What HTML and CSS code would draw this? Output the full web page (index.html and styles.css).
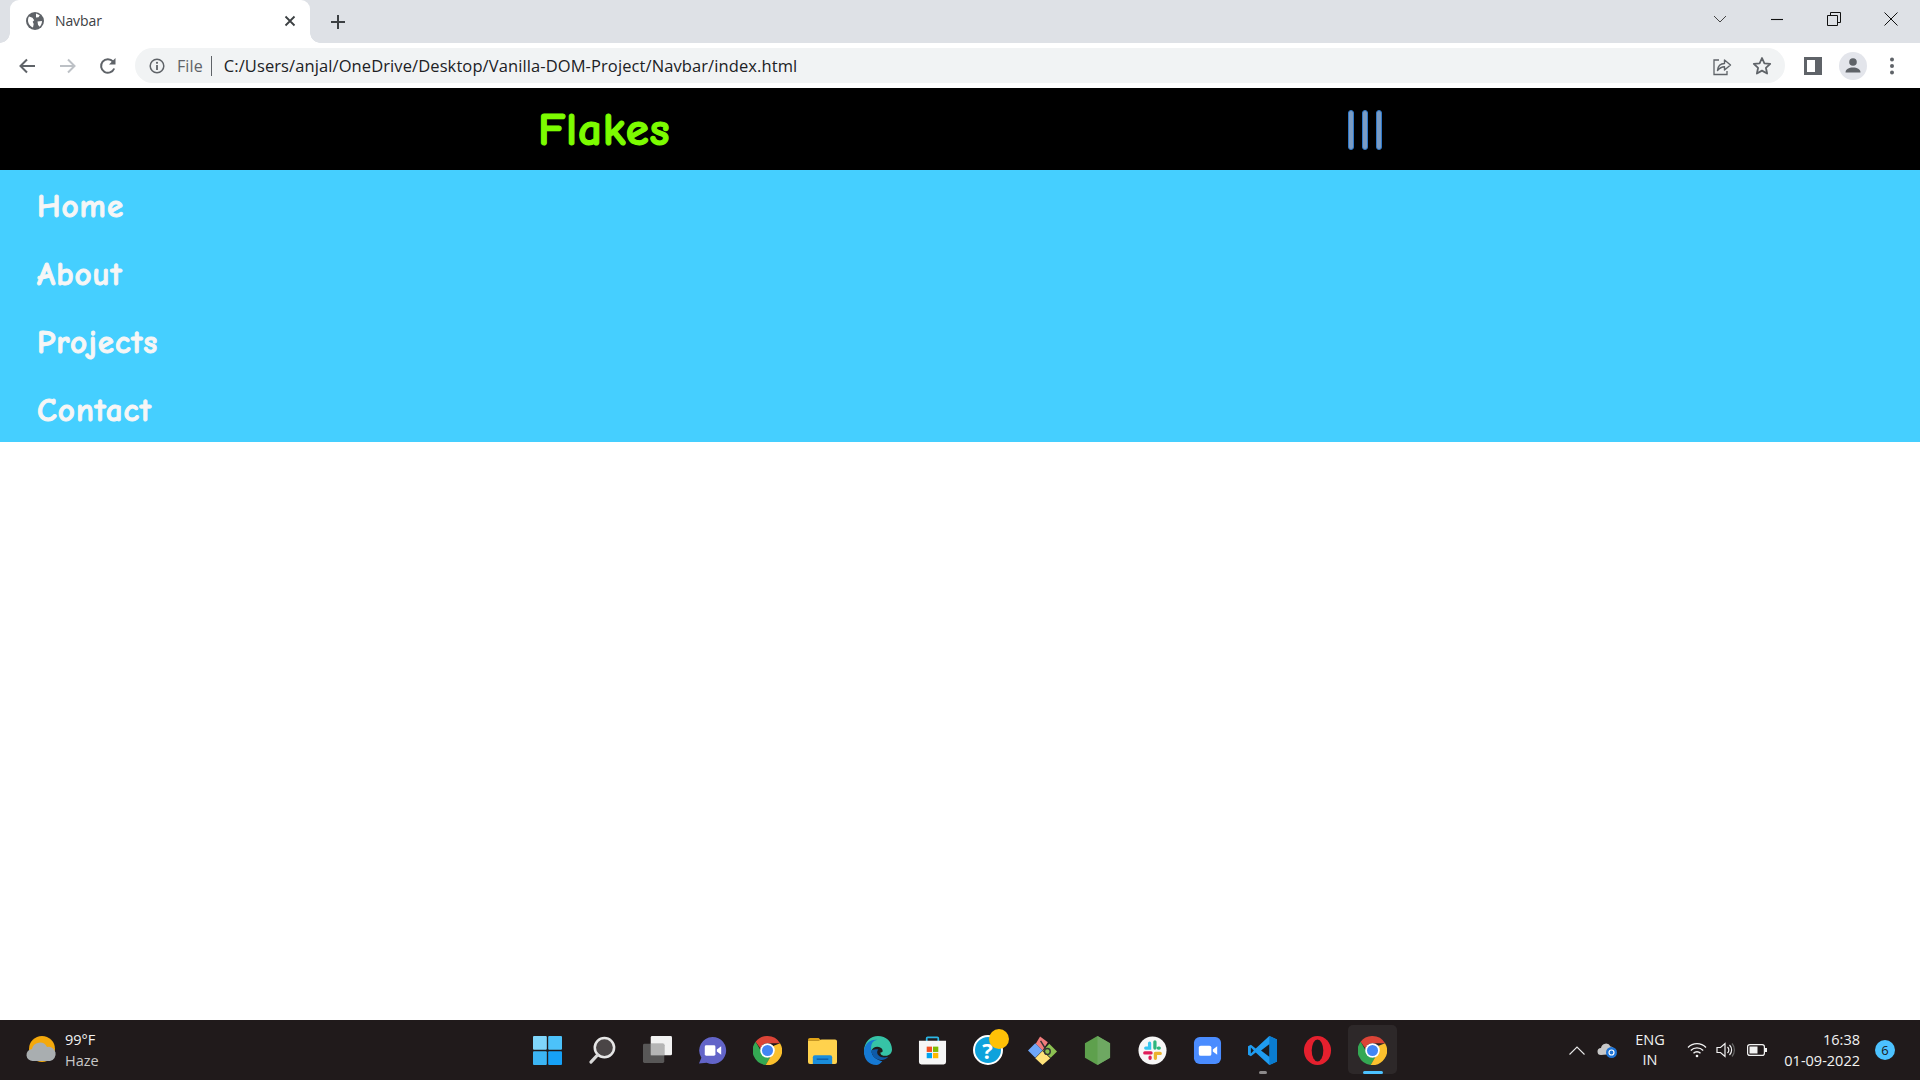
FILE: index.html
```html
<!DOCTYPE html>
<html lang="en">
<head>
<meta charset="utf-8">
<title>Navbar</title>
<link rel="stylesheet" href="styles.css">
</head>
<body>
<svg class="defs" width="0" height="0" aria-hidden="true">
  <symbol id="chrome" viewBox="0 0 48 48">
    <path fill="#db4437" d="M24 4a20 20 0 0 1 17.3 10H24a10 10 0 0 0-9.600 7.200L7.600 12A20 20 0 0 1 24 4z"/>
    <path fill="#34a853" d="M7.600 12l9.300 16a9.900 9.900 0 0 0 11.200 5.100L21.500 44A20 20 0 0 1 7.600 12z"/>
    <path fill="#fbc02d" d="M41.300 14A20 20 0 0 1 21.500 44l8.600-14.900A10 10 0 0 0 31 18z"/>
    <circle cx="24" cy="24" r="10" fill="#fff"/>
    <circle cx="24" cy="24" r="7.600" fill="#4285f4"/>
  </symbol>
</svg>

<div class="tabstrip">
  <div class="tab">
    <svg class="favicon" viewBox="0 0 18 18"><circle cx="9" cy="9" r="9" fill="#5f6368"/><path fill="#fff" d="M3 4.500l3.500 1.300 1.700 2.500-1.500 1.500 1 2.300-.7 3.500C4 14.500 1.800 11 2 8c.1-1.300.4-2.600 1-3.500zM10 1.500l3.800 1.700-1.300 2-2.500.3zM11.500 9.500l4.500-.5c0 2.500-1 4.500-2.500 5.700l-1.500-2z"/></svg>
    <span class="tab-title">Navbar</span>
    <svg class="tab-close" viewBox="0 0 12 12"><path d="M1.500 1.500l9 9M10.500 1.500l-9 9" stroke="#3c4043" stroke-width="1.800" fill="none"/></svg>
  </div>
  <svg class="new-tab" viewBox="0 0 14 14"><path d="M7 0v14M0 7h14" stroke="#3c4043" stroke-width="2" fill="none"/></svg>
  <div class="window-controls">
    <svg class="wc wc-chevron" viewBox="0 0 14 8"><path d="M1 1l6 6 6-6" stroke="#444" fill="none"/></svg>
    <svg class="wc" viewBox="0 0 14 14"><path d="M1 7.500h12" stroke="#111" stroke-width="1.100" fill="none"/></svg>
    <svg class="wc" viewBox="0 0 14 14"><path d="M.5 3.500h10v10H.5zM3.500 3.500V.5h10v10h-3" stroke="#111" fill="none"/></svg>
    <svg class="wc" viewBox="0 0 14 14"><path d="M.5.5l13 13M13.500.5l-13 13" stroke="#111" fill="none"/></svg>
  </div>
</div>

<div class="toolbar">
  <svg class="tool" viewBox="0 0 18 18"><path d="M17 9H3M9 2.500L2.500 9 9 15.500" stroke="#5f6368" stroke-width="2" fill="none"/></svg>
  <svg class="tool" viewBox="0 0 18 18"><path d="M1 9h14M9 2.500L15.500 9 9 15.500" stroke="#bdc1c6" stroke-width="2" fill="none"/></svg>
  <svg class="tool" viewBox="0 0 18 18"><path d="M15.200 11.500A6.800 6.800 0 1 1 14 4.500" stroke="#5f6368" stroke-width="2" fill="none"/><path d="M16.500 1v6.500H10z" fill="#5f6368"/></svg>
  <div class="omnibox">
    <svg class="info" viewBox="0 0 16 16"><circle cx="8" cy="8" r="6.800" stroke="#5f6368" stroke-width="1.500" fill="none"/><path d="M8 7v5" stroke="#5f6368" stroke-width="1.800"/><circle cx="8" cy="4.800" r="1.100" fill="#5f6368"/></svg>
    <span class="scheme">File</span>
    <span class="sep"></span>
    <span class="url">C:/Users/anjal/OneDrive/Desktop/Vanilla-DOM-Project/Navbar/index.html</span>
    <svg class="omni-icon share" viewBox="0 0 20 20"><path d="M7 4H2v14.500h13V15" stroke="#5f6368" stroke-width="1.300" fill="none"/><path d="M5.500 14.500C6 9.500 9 7.500 12.500 7.500V4l6 5-6 5v-3.300C9.500 10.700 7.500 12 5.500 14.500z" stroke="#5f6368" stroke-width="1.400" fill="none" stroke-linejoin="round"/></svg>
    <svg class="omni-icon star" viewBox="0 0 20 20"><path d="M10 2l2.400 5.300 5.800.6-4.300 3.900 1.200 5.700L10 14.600l-5.100 2.900 1.200-5.700L1.800 7.900l5.800-.6z" stroke="#5f6368" stroke-width="1.800" fill="none" stroke-linejoin="round"/></svg>
  </div>
  <svg class="side-panel" viewBox="0 0 18 18"><rect width="18" height="18" fill="#5f6368"/><rect x="3" y="3" width="8" height="12" fill="#fff"/></svg>
  <div class="avatar"><svg viewBox="0 0 20 20"><circle cx="10" cy="6" r="3.800" fill="#5f6368"/><path d="M2.500 16.500c0-3.500 3.500-5 7.500-5s7.500 1.500 7.500 5z" fill="#5f6368"/></svg></div>
  <svg class="dots" viewBox="0 0 4 18"><circle cx="2" cy="2.500" r="2" fill="#5f6368"/><circle cx="2" cy="9" r="2" fill="#5f6368"/><circle cx="2" cy="15.500" r="2" fill="#5f6368"/></svg>
</div>

<header class="nav">
  <div class="logo">Flakes</div>
  <div class="burger"><span></span><span></span><span></span></div>
</header>
<ul class="menu">
  <li>Home</li>
  <li>About</li>
  <li>Projects</li>
  <li>Contact</li>
</ul>
<main class="page"></main>

<footer class="taskbar">
  <div class="weather">
    <svg class="weather-icon" viewBox="0 0 32 28"><circle cx="17" cy="13" r="13" fill="#f4a90c"/><path d="M8 25a6 6 0 0 1-1-12 8 8 0 0 1 15-2 7 7 0 0 1 3 14z" fill="#a9aeb0"/></svg>
    <div class="weather-text"><span>99°F</span><span class="muted">Haze</span></div>
  </div>

  <div class="apps">
    <div class="app"><svg class="i" viewBox="0 0 30 30"><rect width="14.300" height="14.300" rx="1" fill="#7fd6fb"/><rect x="15.700" width="14.300" height="14.300" rx="1" fill="#4cc2fa"/><rect y="15.700" width="14.300" height="14.300" rx="1" fill="#3cb5f4"/><rect x="15.700" y="15.700" width="14.300" height="14.300" rx="1" fill="#16a1f7"/></svg></div>
    <div class="app"><svg class="i" viewBox="0 0 30 30"><circle cx="17" cy="12" r="10" fill="#4a4546" stroke="#e6e6e6" stroke-width="2.600"/><path d="M10 19.500L3 27" stroke="#d8d8d8" stroke-width="3.200" stroke-linecap="round"/></svg></div>
    <div class="app"><svg class="i" viewBox="0 0 30 30"><rect x="8" width="22" height="20" rx="1.500" fill="#f2f2f2"/><rect y="8" width="22" height="20" rx="1.500" fill="#5e5e5e" fill-opacity=".9"/><rect x="8" y="8" width="14" height="12" fill="#b5b5b5"/></svg></div>
    <div class="app"><svg class="i" viewBox="0 0 30 30"><path d="M15 1a14 14 0 1 1-6 26.600L1 28.500l2.500-6A14 14 0 0 1 15 1z" fill="#6264c8"/><rect x="7" y="9.500" width="11" height="11" rx="1.500" fill="#fff"/><path d="M19.500 14l4.500-3.500v9L19.500 16z" fill="#fff"/></svg></div>
    <div class="app"><svg class="i" viewBox="4 4 40 40"><use href="#chrome" width="48" height="48"/></svg></div>
    <div class="app"><svg class="i i-files" viewBox="0 0 30 28"><path d="M0 3a2 2 0 0 1 2-2h9l3 3h-14z" fill="#e0a317"/><path d="M0 4h11l3-1.500H28a2 2 0 0 1 2 2V26a2 2 0 0 1-2 2H2a2 2 0 0 1-2-2z" fill="#ffd24d"/><path d="M5 28v-7a2 2 0 0 1 2-2h16a2 2 0 0 1 2 2v7z" fill="#1a8ddb"/><path d="M9 23h12" stroke="#0a5da8" stroke-width="1.500"/></svg></div>
    <div class="app"><svg class="i" viewBox="0 0 30 30"><path d="M1 16C1 6 8 0 15.500 0 24 0 30 6 30 14c0 4-3 6.500-6.500 6.500-4 0-5.500-1.500-5.500-3.500 4 .5 3-6-3.500-6C10 11 8 15 8.500 19 3 23 1 20 1 16z" fill="#36c3a6"/><path d="M1 16c0-8 7-13 14-12-5 1-7 4-6.500 10.500C9 22 15 25 20 26c-2 2-4 4-6 4C6 30 1 24 1 16z" fill="#1679d3"/><path d="M8.500 15c.5 6 6 11 12.500 9.500 2.500-.5 4-1.500 5-3-3 1.500-8 1-10-1.500-2-2-1.500-5 0-6-4-1-7 .5-7.500 1z" fill="#0e5aa8"/></svg></div>
    <div class="app"><svg class="i" viewBox="0 0 30 30"><path d="M9 6V2.500a1 1 0 0 1 1-1h10a1 1 0 0 1 1 1V6" stroke="#2bb7e6" stroke-width="1.800" fill="none"/><path d="M1 5h28v22a2.500 2.500 0 0 1-2.500 2.500h-23A2.500 2.500 0 0 1 1 27z" fill="#f6f6f6"/><rect x="9" y="11" width="5.500" height="5.500" fill="#f25022"/><rect x="15.500" y="11" width="5.500" height="5.500" fill="#7fba00"/><rect x="9" y="17.500" width="5.500" height="5.500" fill="#00a4ef"/><rect x="15.500" y="17.500" width="5.500" height="5.500" fill="#ffb900"/></svg></div>
    <div class="app"><div class="help-circle">?</div><span class="help-dot"></span></div>
    <div class="app"><svg class="i" viewBox="0 0 30 30"><path d="M15 15L8 8l4.500-7.500 8 6z" fill="#f07c7c"/><path d="M0 15l7.500-7.500L15 15l-7.500 7.500z" fill="#6ea6f8"/><path d="M15.500 15l6.500-7 8 8-6.500 6.500z" fill="#8cc152"/><path d="M7.500 23l7.500-7.500 8 7.500-8 7z" fill="#ffe27a"/><circle cx="20" cy="16" r="3" fill="none" stroke="#333" stroke-width="1.500"/><path d="M13 5l5 8" stroke="#333" stroke-width="1.500"/></svg></div>
    <div class="app"><svg class="i" viewBox="0 0 28 30"><path d="M14 0l13 7.500v15L14 30 1 22.500v-15z" fill="#5ea04d"/><path d="M14 0l13 7.500v15L14 30z" fill="#6ea862"/></svg></div>
    <div class="app"><svg class="i" viewBox="0 0 30 30"><circle cx="15" cy="15" r="14.500" fill="#f7f7f7"/><g stroke-width="3.400" stroke-linecap="round" fill="none"><path d="M12 7.500v5H8" stroke="#36c5f0"/><path d="M17.500 6v6.500M22 12.500h-1" stroke="#2eb67d"/><path d="M18 18h5M18 18v5" stroke="#ecb22e"/><path d="M7 17.500h6.500M12.500 22v1" stroke="#e01e5a"/></g></svg></div>
    <div class="app"><svg class="i" viewBox="0 0 30 30"><rect width="28" height="28" x="1" y="1" rx="6" fill="#4a8cff"/><rect x="6" y="10" width="13" height="10.500" rx="2" fill="#fff"/><path d="M20.500 14l4.500-3.500v9L20.500 16z" fill="#fff"/></svg></div>
    <div class="app"><svg class="i" viewBox="0 0 30 30"><path d="M22 0l8 3.500v23L22 30 8 17l-5 4-3-1.500v-9L3 9l5 4z" fill="#1f9cf0"/><path d="M22 0l8 3.500v23L22 30z" fill="#0a7cd0"/><path d="M22 8.500v13L13.500 15z" fill="#1c1a1b"/><path d="M3 12v6l3-3z" fill="#1c1a1b"/></svg><span class="mark"></span></div>
    <div class="app"><svg class="i" viewBox="0 0 30 30"><ellipse cx="15" cy="15" rx="14" ry="15" fill="#e5202e"/><ellipse cx="15" cy="15" rx="6" ry="11.500" fill="#1f1a1b"/></svg></div>
    <div class="app active"><svg class="i" viewBox="4 4 40 40"><use href="#chrome" width="48" height="48"/></svg><span class="mark mark-on"></span></div>
  </div>

  <div class="tray">
    <svg class="tray-chevron" viewBox="0 0 16 9"><path d="M.5 8.500L8 1l7.500 7.500" stroke="#e8e8e8" stroke-width="1.100" fill="none"/></svg>
    <svg class="tray-cloud" viewBox="0 0 20 16"><path d="M4 13a3.500 3.500 0 0 1 0-7 5 5 0 0 1 9.500-1.500A4 4 0 0 1 15 12z" fill="#c8c8c8"/><circle cx="14.500" cy="10.500" r="5.500" fill="#1e74d6"/><circle cx="14.500" cy="10.500" r="2.500" fill="none" stroke="#fff" stroke-width="1.200"/></svg>
    <div class="lang"><span>ENG</span><span>IN</span></div>
    <svg class="tray-wifi" viewBox="0 0 20 16"><path d="M1 5.500a12.500 12.500 0 0 1 18 0M3.800 8.500a8.500 8.500 0 0 1 12.400 0M6.500 11.300a4.700 4.700 0 0 1 7 0" stroke="#f2f2f2" stroke-width="1.300" fill="none"/><circle cx="10" cy="14" r="1.300" fill="#f2f2f2"/></svg>
    <svg class="tray-sound" viewBox="0 0 20 16"><path d="M1 5.500h3.500L9 1.500v13L4.500 10.500H1z" stroke="#f2f2f2" stroke-width="1.200" fill="none"/><path d="M11.500 5a4 4 0 0 1 0 6M13.500 3a7 7 0 0 1 0 10" stroke="#f2f2f2" stroke-width="1.200" fill="none"/><path d="M16 1.500a10 10 0 0 1 0 13" stroke="#666" stroke-width="1.200" fill="none"/></svg>
    <svg class="tray-battery" viewBox="0 0 20 12"><rect x=".6" y=".6" width="16.800" height="10.800" rx="2.200" stroke="#f2f2f2" stroke-width="1.200" fill="none"/><rect x="2.500" y="2.500" width="8" height="7" fill="#f2f2f2"/><rect x="18" y="4" width="2" height="4" fill="#f2f2f2"/></svg>
    <div class="clock"><span>16:38</span><span>01-09-2022</span></div>
    <div class="badge">6</div>
  </div>
</footer>
</body>
</html>
```
FILE: styles.css
```css
* { box-sizing: border-box; }
html, body { height: 100%; }
body {
  margin: 0;
  height: 1080px;
  display: flex;
  flex-direction: column;
  overflow: hidden;
  background: #fff;
  font-family: "Open Sans", "Noto Sans", sans-serif;
}
.defs { position: absolute; }

/* browser chrome */
.tabstrip {
  height: 43px;
  flex: none;
  background: #dee1e6;
  display: flex;
  align-items: center;
  padding-left: 10px;
}
.tab {
  position: relative;
  width: 300px;
  height: 43px;
  background: #fff;
  border-radius: 9px 9px 0 0;
  display: flex;
  align-items: center;
  padding-left: 16px;
  padding-bottom: 2px;
  align-self: flex-end;
}
.tab::before, .tab::after {
  content: "";
  position: absolute;
  bottom: 0;
  width: 10px;
  height: 10px;
  background: radial-gradient(circle at 0 0, #dee1e6 9.500px, #fff 10px);
}
.tab::before { left: -10px; }
.tab::after { right: -10px; transform: scaleX(-1); }
.favicon { width: 18px; height: 18px; flex: none; }
.tab-title {
  margin-left: 11px;
  font-size: 14px;
  color: #3c4043;
  letter-spacing: -.1px;
  flex: 1;
}
.tab-close { width: 12px; height: 12px; margin-right: 14px; }
.new-tab { width: 14px; height: 14px; margin-left: 21px; }
.window-controls {
  margin-left: auto;
  display: flex;
  align-items: center;
  height: 38px;
  align-self: flex-start;
  padding-right: 22px;
  gap: 43px;
}
.wc { width: 14px; height: 14px; }
.wc-chevron { height: 8px; }

.toolbar {
  height: 45px;
  flex: none;
  background: #fff;
  display: flex;
  align-items: center;
  padding-left: 18px;
}
.tool { width: 18px; height: 18px; margin-right: 22.500px; flex: none; }
.omnibox {
  width: 1650px;
  height: 35px;
  margin-left: -4.500px;
  flex: none;
  background: #f1f3f4;
  border-radius: 18px;
  display: flex;
  align-items: center;
  padding-left: 14px;
}
.info { width: 16px; height: 16px; flex: none; }
.scheme { margin-left: 12px; font-size: 16px; color: #5f6368; letter-spacing: .1px; }
.sep { width: 1px; height: 20px; margin-left: 8px; background: #5f6368; }
.url {
  margin-left: 12px;
  font-size: 16.500px;
  color: #202124;
  letter-spacing: .1px;
  white-space: nowrap;
  flex: 1;
}
.omni-icon { width: 20px; height: 20px; flex: none; }
.share { margin-right: 20px; }
.star { margin-right: 13px; }
.side-panel { width: 18px; height: 18px; margin-left: 19px; flex: none; }
.avatar {
  width: 28px;
  height: 28px;
  margin-left: 17px;
  border-radius: 50%;
  background: #e3e5eb;
  display: flex;
  align-items: center;
  justify-content: center;
  flex: none;
}
.avatar svg { width: 20px; height: 20px; }
.dots { width: 4px; height: 18px; margin-left: 23px; flex: none; }

/* page */
.nav {
  height: 82px;
  flex: none;
  background: #000;
  display: flex;
  align-items: center;
  justify-content: space-between;
  padding: 2px 538px 0;
}
.logo {
  font-family: "Comic Sans MS", "Comic Neue", cursive;
  font-size: 47px;
  line-height: 1;
  font-weight: 700;
  letter-spacing: .8px;
  color: #7cfc00;
  -webkit-text-stroke: 1.200px #7cfc00;
}
.burger { display: flex; gap: 8px; }
.burger span {
  width: 6px;
  height: 40px;
  border-radius: 3px;
  background: #7a9cc4;
  border: 1px solid #2f78c8;
}
.menu {
  list-style: none;
  margin: 0;
  padding: 0 0 0 37px;
  flex: none;
  background: #45cfff;
}
.menu li {
  height: 68px;
  padding-top: 4px;
  display: flex;
  align-items: center;
  font-family: "Comic Sans MS", "Comic Neue", cursive;
  font-size: 33px;
  font-weight: 700;
  letter-spacing: 1px;
  color: #f6f6f6;
  -webkit-text-stroke: .9px #f6f6f6;
}
.page { flex: 1; background: #fff; }

/* taskbar */
.taskbar {
  height: 60px;
  flex: none;
  background: #201a1b;
  display: grid;
  grid-template-columns: 1fr 880px 1fr;
  align-items: center;
  color: #f2f2f2;
  font-size: 14.500px;
}
.weather { display: flex; align-items: center; padding-left: 25px; }
.weather-icon { width: 32px; height: 28px; }
.weather-text {
  margin-left: 8px;
  display: flex;
  flex-direction: column;
  line-height: 21px;
}
.muted { color: #c8c8c8; }
.apps { display: flex; height: 60px; }
.app {
  position: relative;
  width: 55px;
  height: 60px;
  display: flex;
  align-items: center;
  justify-content: center;
}
.i { width: 29px; height: 29px; }
.active::before {
  content: "";
  position: absolute;
  left: 3px;
  top: 5px;
  width: 49px;
  height: 49px;
  border-radius: 5px;
  background: #2d2829;
}
.active .i { position: relative; }
.mark {
  position: absolute;
  left: 24px;
  bottom: 6px;
  width: 8px;
  height: 3px;
  border-radius: 2px;
  background: #8d8a8b;
}
.mark-on { left: 18px; width: 20px; background: #4cc2ff; }
.help-circle {
  width: 30px;
  height: 30px;
  border-radius: 50%;
  border: 2px solid #fff;
  background: #0ea2dc;
  color: #fff;
  font-size: 22px;
  line-height: 26px;
  font-weight: 700;
  text-align: center;
}
.help-dot {
  position: absolute;
  left: 29px;
  top: 9px;
  width: 20px;
  height: 20px;
  border-radius: 50%;
  background: #ffc107;
}
.tray { display: flex; align-items: center; justify-content: flex-end; padding-right: 25px; }
.tray-chevron { width: 16px; height: 9px; }
.tray-cloud { width: 20px; height: 16px; margin-left: 12px; }
.lang {
  width: 40px;
  margin-left: 13px;
  display: flex;
  flex-direction: column;
  align-items: center;
  line-height: 20px;
}
.tray-wifi { width: 20px; height: 16px; margin-left: 17px; }
.tray-sound { width: 20px; height: 16px; margin-left: 9px; }
.tray-battery { width: 20px; height: 12px; margin-left: 11px; }
.clock {
  width: 93px;
  display: flex;
  flex-direction: column;
  align-items: flex-end;
  line-height: 21px;
}
.badge {
  width: 20px;
  height: 20px;
  margin-left: 15px;
  border-radius: 50%;
  background: #4cc2ff;
  color: #1a1a1a;
  font-size: 13px;
  line-height: 20px;
  text-align: center;
}
```
